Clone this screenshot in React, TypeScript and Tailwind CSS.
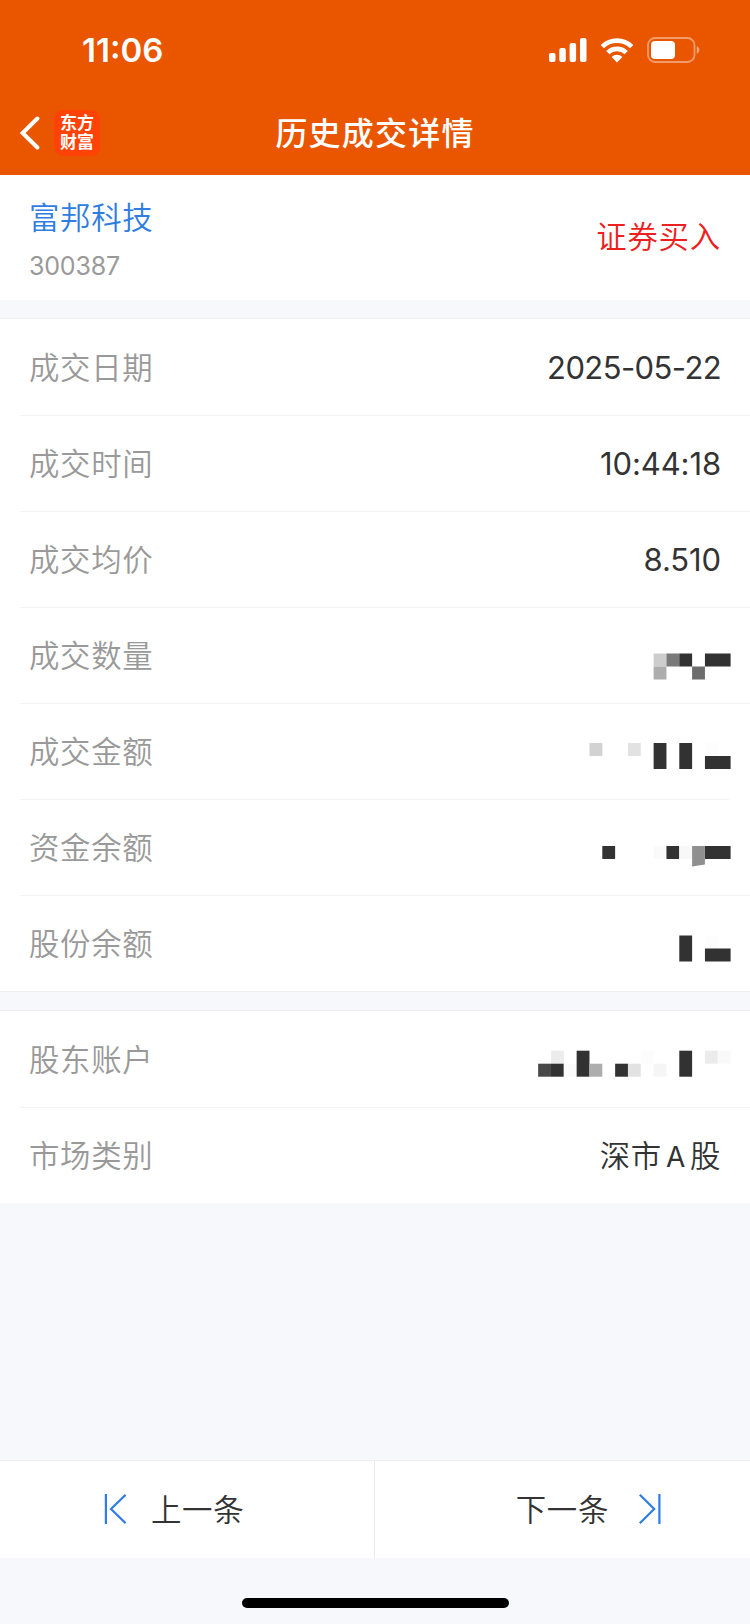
import React from "react";

type Cell = [k: number, row: 0 | 1, w: number, h: number, color: string];

const CELL = 12.83;
const DARK = "#323232";

function Mosaic({ top, cells, children }: { top: number; cells: Cell[]; children?: React.ReactNode }) {
  return (
    <svg width="240" height="96" viewBox="0 0 240 96" className="-mr-[29px] shrink-0">
      {cells.map(([k, row, w, h, color], i) => (
        <rect
          key={i}
          x={220.6 - k * CELL}
          y={top + row * 13}
          width={w * CELL}
          height={h * 13}
          fill={color}
        />
      ))}
      {children}
    </svg>
  );
}

function Row({ label, children, line = "right-0" }: { label: string; children: React.ReactNode; line?: string }) {
  return (
    <div className="relative flex h-24 items-center justify-between pr-[29px] pl-[29px]">
      <span className="pt-[3px] text-[30.4px] leading-none tracking-[0.7px] text-[#999999]">{label}</span>
      {children}
      {line !== "none" && <i className={`absolute -bottom-px left-5 h-px bg-[#f3f3f5] ${line}`} />}
    </div>
  );
}

function Value({ children, className = "tracking-[-0.1px]" }: { children: React.ReactNode; className?: string }) {
  return (
    <span className={`font-[Inter] text-[31px] leading-none font-normal text-[#333333] ${className}`}>{children}</span>
  );
}

export default function App() {
  return (
    <div className="flex h-[1624px] w-[750px] flex-col overflow-hidden bg-[#f7f8fb] font-['Inter','Noto_Sans_CJK_SC',sans-serif] font-[350]">
      <header className="h-[175px] shrink-0 bg-[#ea5500] text-white">
        <div className="flex h-[100px] items-center justify-between pr-[50px] pl-[82px]">
          <span className="pt-px text-[33px] leading-none font-semibold">11:06</span>
          <div className="flex items-center">
            <svg width="38" height="24" viewBox="0 0 38 24" fill="white">
              <rect x="0" y="15" width="6.5" height="9" rx="2" />
              <rect x="10.3" y="10" width="6.5" height="14" rx="2" />
              <rect x="20.6" y="5" width="6.5" height="19" rx="2" />
              <rect x="31" y="0" width="6.5" height="24" rx="2" />
            </svg>
            <svg width="34" height="25" viewBox="0 0 34 25" className="ml-[13px]" fill="none" stroke="white">
              <path d="M2.3 8.6 A21 21 0 0 1 31.7 8.6" strokeWidth="4.6" />
              <path d="M7.8 14.6 A13.2 13.2 0 0 1 26.2 14.6" strokeWidth="4.6" />
              <path d="M17 24.5 L11.6 18.9 A7.7 7.7 0 0 1 22.4 18.9 Z" fill="white" stroke="none" />
            </svg>
            <svg width="53" height="26" viewBox="0 0 53 26" className="ml-[13px]">
              <rect x="1" y="1" width="46.5" height="24" rx="7" fill="none" stroke="white" strokeOpacity="0.42" strokeWidth="1.8" />
              <rect x="4" y="4" width="24" height="18" rx="4" fill="white" />
              <path d="M49.8 9 Q52.4 10.4 52.4 13 Q52.4 15.6 49.8 17 Z" fill="white" fillOpacity="0.5" />
            </svg>
          </div>
        </div>
        <div className="relative flex h-[65px] items-center pl-5">
          <svg width="20" height="34" viewBox="0 0 20 34" fill="none" stroke="white" strokeWidth="4">
            <path d="M17.4 2.5 L2.6 17 L17.4 31.5" strokeLinecap="round" strokeLinejoin="miter" />
          </svg>
          <div className="ml-3.5 flex h-[46px] w-[46px] flex-col items-center justify-center rounded-[9px] bg-[#ff4205] text-[17px] leading-[19px] font-bold">
            <span>东方</span>
            <span>财富</span>
          </div>
          <h1 className="absolute inset-x-0 top-[18px] text-center text-[32px] leading-8 font-medium tracking-[1.2px]">
            历史成交详情
          </h1>
        </div>
      </header>

      <section className="flex h-[125px] shrink-0 items-center justify-between bg-white px-[29px]">
        <div className="pt-[5px]">
          <div className="text-[30.4px] leading-9 tracking-[0.7px] text-[#2f7de1]">富邦科技</div>
          <div className="mt-4 text-[25px] leading-7 font-normal tracking-[-0.2px] text-[#999999]">300387</div>
        </div>
        <div className="pb-px text-[30.4px] leading-none tracking-[0.8px] text-[#ec2020]">证券买入</div>
      </section>

      <section className="mt-[18px] shrink-0 border-y border-[#efeff2] bg-white">
        <Row label="成交日期"><Value className="tracking-[-0.6px]">2025-05-22</Value></Row>
        <Row label="成交时间"><Value>10:44:18</Value></Row>
        <Row label="成交均价"><Value>8.510</Value></Row>
        <Row label="成交数量">
          <Mosaic
            top={46.5}
            cells={[
              [6, 0, 1, 1, "#cdcdcd"], [5, 0, 1, 1, "#7a7a7a"], [4, 0, 1, 1, DARK], [2, 0, 2, 1, DARK],
              [6, 1, 1, 1, "#adadad"], [3, 1, 1, 1, "#6d6d6d"],
            ]}
          />
        </Row>
        <Row label="成交金额" line="right-[21px]">
          <Mosaic
            top={40}
            cells={[
              [11, 0, 1, 1, "#d2d2d2"], [8, 0, 1, 1, "#e2e2e2"], [6, 0, 1, 2, DARK],
              [4, 0, 1, 2, DARK], [2, 0, 1, 1, "#fdfdfd"], [2, 1, 2, 1, DARK],
            ]}
          />
        </Row>
        <Row label="资金余额">
          <Mosaic
            top={47}
            cells={[
              [10, 0, 1, 1, DARK], [6, 0, 1, 1, "#fafafa"], [5, 0, 1, 1, DARK],
              [4, 0, 1, 1, "#f8f8f8"], [2, 0, 2, 1, DARK],
            ]}
          >
            <path d="M182.1 47 H194.9 V65.4 L182.1 67.6 Z" fill="#8f8f8f" />
          </Mosaic>
        </Row>
        <Row label="股份余额" line="none">
          <Mosaic top={40.5} cells={[[4, 0, 1, 2, DARK], [2, 0, 1, 1, "#fdfdfd"], [2, 1, 2, 1, DARK]]} />
        </Row>
      </section>

      <section className="mt-[18px] shrink-0 border-t border-[#efeff2] bg-white">
        <Row label="股东账户">
          <Mosaic
            top={39.7}
            cells={[
              [15, 1, 1, 1, "#484848"], [14, 0, 1, 1, "#ececec"], [14, 1, 1, 1, DARK], [13, 1, 1, 1, "#fafafa"],
              [12, 0, 1, 2, DARK], [11, 1, 1, 1, "#adadad"], [9, 1, 1, 1, DARK], [8, 1, 1, 1, "#e2e2e2"],
              [7, 0, 1, 1, "#fcfcfc"], [6, 1, 1, 1, "#f5f5f5"], [4, 0, 1, 2, DARK],
              [2, 0, 1, 1, "#ebebeb"], [1, 0, 1, 1, "#f9f9f9"],
            ]}
          />
        </Row>
        <Row label="市场类别" line="none">
          <span className="pt-[3px] text-[30.4px] leading-none tracking-[0.7px] text-[#333333]">
            深市<span className="mx-[4px] text-[28px] font-normal">A</span>股
          </span>
        </Row>
      </section>

      <footer className="mt-auto shrink-0">
        <div className="flex h-[98px] border-t border-[#efeff2] bg-white text-[30.4px] leading-none tracking-[0.7px] text-[#333333]">
          <button className="flex w-[375px] items-center border-r border-[#ececef] pb-px pl-[104px]">
            <svg width="22" height="30" viewBox="0 0 22 30" fill="none" stroke="#2f7de1" strokeWidth="2.2">
              <path d="M1.9 0 V30 M21.6 0.8 L7 15 L21.6 29.2" />
            </svg>
            <span className="ml-[25px] pt-0.5">上一条</span>
          </button>
          <button className="flex flex-1 items-center justify-end pr-[89px] pb-px">
            <span className="mr-[30px] pt-0.5">下一条</span>
            <svg width="22" height="30" viewBox="0 0 22 30" fill="none" stroke="#2f7de1" strokeWidth="2.2">
              <path d="M20.4 0 V30 M0.8 0.8 L15.2 15 L0.8 29.2" />
            </svg>
          </button>
        </div>
        <div className="flex h-[66px] justify-center pt-[40px]">
          <div className="h-[10px] w-[267px] rounded-full bg-black" />
        </div>
      </footer>
    </div>
  );
}
